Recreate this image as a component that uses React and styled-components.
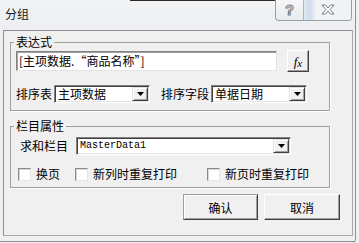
import styled, { createGlobalStyle } from 'styled-components'

const Global = createGlobalStyle`
  html, body {
    margin: 0;
    padding: 0;
    background: #f0f0f0;
  }
  body {
    font-family: "Noto Sans CJK SC", "Noto Sans", sans-serif;
    font-size: 12px;
    color: #000;
  }
`

function Combo({ width, mono, children }) {
  return (
    <ComboBox $width={width}>
      <ComboText $mono={mono}>{children}</ComboText>
      <DropButton>
        <svg width="7" height="4" viewBox="0 0 7 4">
          <path d="M0 0h7L3.5 4z" fill="#000" />
        </svg>
      </DropButton>
    </ComboBox>
  )
}

function Check({ label, gap }) {
  return (
    <CheckItem $gap={gap}>
      <CheckBox />
      <span>{label}</span>
    </CheckItem>
  )
}

export default function App() {
  return (
    <>
      <Global />
      <Window>
        <TitleBar>
          <Title>分组</Title>
          <Caption>
            <CapButton $width={28}>
              <Help>?</Help>
            </CapButton>
            <CapButton $width={47} $last>
              <svg width="14" height="11" viewBox="0 0 14 11">
                <path
                  d="M1 1h3.5L7 4l2.5-3H13L9 5.5 13 10H9.5L7 7l-2.5 3H1l4-4.5z"
                  fill="#fff"
                  stroke="#7a7e85"
                  strokeWidth="1"
                  strokeLinejoin="round"
                />
              </svg>
            </CapButton>
          </Caption>
        </TitleBar>
        <Client>
          <Group>
            <Legend>表达式</Legend>
            <ExprRow>
              <TextBox>[主项数据.“商品名称”]</TextBox>
              <FxButton>
                <i>f</i>
                <i>x</i>
              </FxButton>
            </ExprRow>
            <SortRow>
              <Label>排序表</Label>
              <Combo width={96}>主项数据</Combo>
              <Label $ml={11}>排序字段</Label>
              <Combo width={96}>单据日期</Combo>
            </SortRow>
          </Group>
          <Group $top={8}>
            <Legend>栏目属性</Legend>
            <SumRow>
              <Label $mr={8}>求和栏目</Label>
              <Combo width={215} mono>
                MasterData1
              </Combo>
            </SumRow>
            <CheckRow>
              <Check label="换页" gap={0} />
              <Check label="新列时重复打印" gap={15} />
              <Check label="新页时重复打印" gap={30} />
            </CheckRow>
          </Group>
          <ButtonRow>
            <PushButton $width={75} $default>
              确认
            </PushButton>
            <PushButton $width={76}>取消</PushButton>
          </ButtonRow>
        </Client>
        <BottomEdge />
      </Window>
    </>
  )
}

const Window = styled.div`
  width: 356px;
  height: 243px;
  background: #f0f0f0;
  border-right: 1px solid #8d9096;
  border-bottom-right-radius: 4px;
  box-sizing: border-box;
`

const TitleBar = styled.div`
  height: 30px;
  display: flex;
  justify-content: space-between;
  align-items: flex-start;
  background:
    linear-gradient(to right, transparent 130px, #2b2b2b 130px, #2b2b2b 312px, transparent 312px)
      top / 100% 1px no-repeat,
    linear-gradient(to bottom, #f2f3f5, #eceef1);
`

const Title = styled.div`
  padding: 6px 0 0 5px;
  line-height: 16px;
  font-size: 12px;
  color: #1a1a1a;
`

const Caption = styled.div`
  display: flex;
  margin: -1px 3px 0 0;
  height: 21px;
  border: 1px solid #9a9ea5;
  border-top: none;
  border-radius: 0 0 4px 4px;
  overflow: hidden;
  background: linear-gradient(to bottom, #f6f7f8, #e9ebee);
`

const CapButton = styled.div`
  width: ${(p) => p.$width}px;
  display: flex;
  align-items: center;
  justify-content: center;
  border-right: ${(p) => (p.$last ? 'none' : '1px solid #b0b4ba')};
  box-sizing: border-box;
  background: ${(p) =>
    p.$last
      ? 'linear-gradient(to right, #dfe8f2 0, #cddcec 6px, #f0f2f5 12px, #f0f2f5 100%)'
      : 'transparent'};
`

const Help = styled.span`
  font-family: "Liberation Sans", sans-serif;
  font-weight: bold;
  font-size: 14px;
  line-height: 14px;
  color: #fff;
  -webkit-text-stroke: 1px #7a7e85;
`

const Client = styled.div`
  margin-left: 3px;
  width: 350px;
  height: 206px;
  box-sizing: border-box;
  border: 1px solid #8f8f8f;
  border-right-color: #a8a8a8;
  border-bottom-color: #a8a8a8;
  padding: 4px 0 0 6px;
  display: flex;
  flex-direction: column;
`

const BottomEdge = styled.div`
  margin-top: 5px;
  height: 1px;
  background: #8d9096;
`

const Group = styled.fieldset`
  margin: ${(p) => p.$top || 0}px 0 0 0;
  padding: 0;
  min-width: 0;
  width: 320px;
  box-sizing: border-box;
  border: 1px solid #a0a0a0;
  box-shadow: 1px 1px 0 #fff;
`

const Legend = styled.legend`
  margin-left: 3px;
  padding: 0 2px;
  font-size: 12px;
  line-height: 14px;
`

const ExprRow = styled.div`
  display: flex;
  align-items: center;
  height: 22px;
  margin-top: 1px;
  padding-left: 5px;
`

const TextBox = styled.div`
  width: 261px;
  height: 20px;
  box-sizing: border-box;
  background: #fff;
  border: 1px solid;
  border-color: #828282 #e3e3e3 #e3e3e3 #828282;
  box-shadow: inset 1px 1px 0 #a0a0a0;
  padding-left: 2px;
  line-height: 18px;
  white-space: nowrap;
  overflow: hidden;
`

const FxButton = styled.div`
  width: 22px;
  height: 22px;
  margin-left: 10px;
  box-sizing: border-box;
  display: flex;
  align-items: center;
  justify-content: center;
  border: 1px solid;
  border-color: #fff #404040 #404040 #fff;
  box-shadow: inset -1px -1px 0 #a0a0a0;
  font-family: "Liberation Serif", serif;
  font-size: 13px;
  line-height: 1;

  i:last-child {
    font-size: 11px;
    margin-top: 4px;
  }
`

const SortRow = styled.div`
  display: flex;
  align-items: center;
  height: 18px;
  margin-top: 13px;
  padding: 0 0 7px 5px;
`

const SumRow = styled.div`
  display: flex;
  align-items: center;
  height: 18px;
  margin-top: 4px;
  padding-left: 9px;
`

const Label = styled.span`
  margin-left: ${(p) => p.$ml || 0}px;
  margin-right: ${(p) => (p.$mr !== undefined ? p.$mr : 2)}px;
  line-height: 16px;
  white-space: nowrap;
`

const ComboBox = styled.div`
  width: ${(p) => p.$width}px;
  height: 18px;
  box-sizing: border-box;
  display: flex;
  align-items: center;
  background: #fff;
  border: 1px solid;
  border-color: #828282 #fff #fff #828282;
  box-shadow: inset 1px 1px 0 #404040, inset -1px -1px 0 #e3e3e3;
  padding: 1px 1px 1px 2px;
`

const ComboText = styled.span`
  flex: 1;
  font-family: ${(p) =>
    p.$mono ? '"Liberation Mono", monospace' : 'inherit'};
  font-size: ${(p) => (p.$mono ? '10px' : '12px')};
  line-height: 14px;
  padding-left: 1px;
  white-space: nowrap;
`

const DropButton = styled.div`
  width: 16px;
  height: 14px;
  box-sizing: border-box;
  display: flex;
  align-items: center;
  justify-content: center;
  background: #f0f0f0;
  border: 1px solid;
  border-color: #e3e3e3 #404040 #404040 #e3e3e3;
  box-shadow: inset 1px 1px 0 #fff, inset -1px -1px 0 #a0a0a0;
`

const CheckRow = styled.div`
  display: flex;
  align-items: center;
  height: 16px;
  margin-top: 11px;
  padding: 0 0 5px 7px;
`

const CheckItem = styled.label`
  display: flex;
  align-items: center;
  gap: 5px;
  margin-left: ${(p) => p.$gap}px;
  line-height: 16px;
  white-space: nowrap;
`

const CheckBox = styled.span`
  width: 13px;
  height: 13px;
  box-sizing: border-box;
  background: #fff;
  border: 1px solid;
  border-color: #8a8a8a #e6e6e6 #e6e6e6 #8a8a8a;
  box-shadow: inset 1px 1px 0 #d8d8d8;
`

const ButtonRow = styled.div`
  display: flex;
  gap: 6px;
  margin-top: 6px;
  padding-left: 173px;
`

const PushButton = styled.div`
  width: ${(p) => p.$width}px;
  height: 26px;
  box-sizing: border-box;
  display: flex;
  align-items: center;
  justify-content: center;
  border: 1px solid;
  border-color: ${(p) =>
    p.$default ? '#a0a0a0 #404040 #404040 #a0a0a0' : '#fff #404040 #404040 #fff'};
  box-shadow: ${(p) =>
    p.$default
      ? 'inset 1px 1px 0 #fff, inset -1px -1px 0 #a0a0a0'
      : 'inset -1px -1px 0 #a0a0a0'};
  font-size: 12px;
`
